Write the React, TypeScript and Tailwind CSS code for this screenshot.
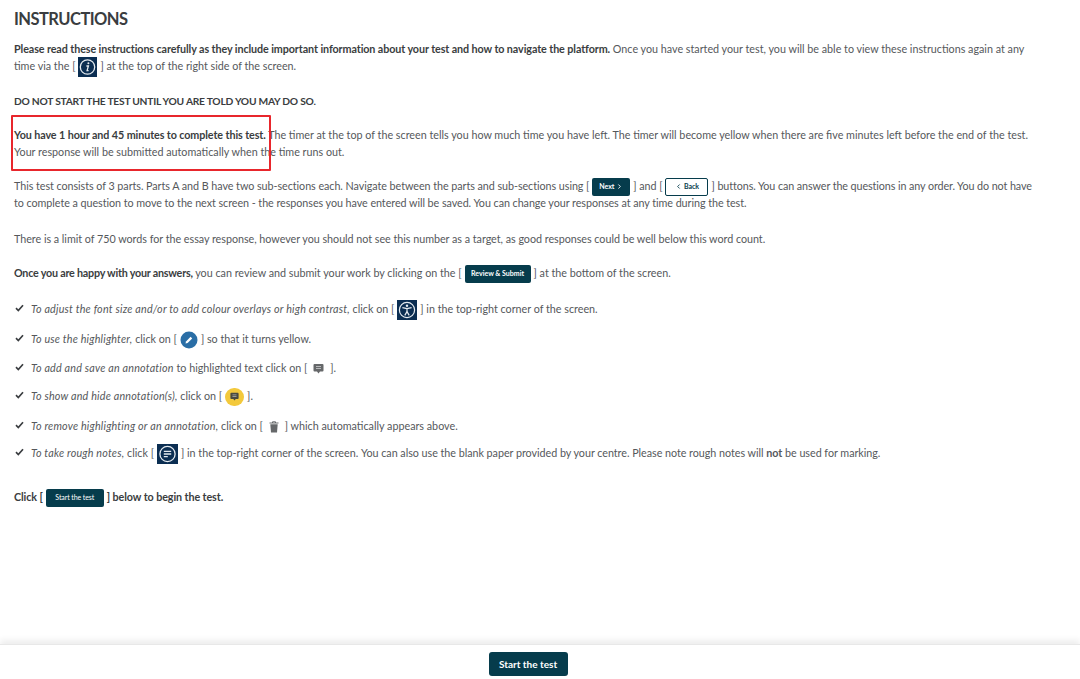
import React from 'react';
import { ChevronLeft, ChevronRight } from 'lucide-react';

const Bracket: React.FC<{ children: React.ReactNode }> = ({ children }) => (
    <span className="inline-flex items-center h-0 align-middle mx-[3px]">{children}</span>
);

const DarkBtn: React.FC<{ className: string; children: React.ReactNode }> = ({ className, children }) => (
    <span className={`inline-flex items-center justify-center rounded-[2px] bg-[#063c4c] text-white font-bold text-[7px] leading-none ${className}`}>
        {children}
    </span>
);

const InfoIcon = () => (
    <svg width="19" height="20" viewBox="0 0 19 20" className="block">
        <rect width="19" height="20" fill="#0b2e52" />
        <circle cx="9.5" cy="10" r="7.2" fill="none" stroke="#e5ebf0" strokeWidth="1.3" />
        <circle cx="10.4" cy="6.2" r="1" fill="#e5ebf0" />
        <path d="M8.4 9h2l-1.3 4.6h1.5" fill="none" stroke="#e5ebf0" strokeWidth="1.3" />
    </svg>
);

const AccessIcon = () => (
    <svg width="20" height="20" viewBox="0 0 20 20" className="block">
        <rect width="20" height="20" fill="#0b2e52" />
        <circle cx="10" cy="10" r="7.6" fill="none" stroke="#e5ebf0" strokeWidth="1.2" />
        <circle cx="10" cy="5.8" r="1.2" fill="#e5ebf0" />
        <path d="M5.4 7.6 10 8.6l4.6-1M10 8.600v3M10 11.600l-2.200 3.800M10 11.600l2.200 3.800" fill="none" stroke="#e5ebf0" strokeWidth="1.2" />
    </svg>
);

const NotesIcon = () => (
    <svg width="21" height="20" viewBox="0 0 21 20" className="block">
        <rect width="21" height="20" fill="#0b2e52" />
        <circle cx="10.5" cy="10" r="7.6" fill="none" stroke="#e5ebf0" strokeWidth="1.3" />
        <path d="M6.800 7.300h7.400M6.800 10h7.400M6.800 12.700h4" fill="none" stroke="#e5ebf0" strokeWidth="1.3" />
    </svg>
);

const PenIcon = () => (
    <svg width="18" height="18" viewBox="0 0 18 18" className="block">
        <circle cx="9" cy="9" r="8.500" fill="#2a6ea6" />
        <path d="M5.500 12.500 6 10.400l4.600-4.600 1.600 1.600-4.600 4.600z" fill="#fff" />
    </svg>
);

const CommentIcon: React.FC<{ color: string; size: number }> = ({ color, size }) => (
    <svg width={size} height={size} viewBox="0 0 11 11" className="block">
        <path d="M1.500 1h8a1 1 0 0 1 1 1v5.500a1 1 0 0 1-1 1H7L5.500 10.500 4 8.500H1.500a1 1 0 0 1-1-1V2a1 1 0 0 1 1-1z" fill={color} />
        <path d="M3 3.500h5M3 5.500h5" stroke="#fff" strokeWidth="0.9" opacity="0.6" />
    </svg>
);

const TrashIcon = () => (
    <svg width="10" height="12" viewBox="0 0 10 12" className="block">
        <path d="M0.500 2h9M3.500 2V0.800h3V2" fill="none" stroke="#66686a" strokeWidth="1" />
        <path d="M1.300 3.200h7.400L8 11.500H2z" fill="#66686a" />
    </svg>
);

const Check = () => (
    <svg width="9" height="8" viewBox="0 0 9 8" className="shrink-0 block">
        <path d="M1 4.200 3.300 6.500 8 1.200" fill="none" stroke="#3a3d40" strokeWidth="1.700" />
    </svg>
);

const ListItem: React.FC<{ className: string; children: React.ReactNode }> = ({ className, children }) => (
    <li className={`flex items-center gap-[7px] pl-[1px] h-[17px] ${className}`}>
        <Check />
        <span className="whitespace-nowrap">{children}</span>
    </li>
);

const Strong: React.FC<{ children: React.ReactNode }> = ({ children }) => (
    <b className="text-[#3a3d40] tracking-[-0.09px]">{children}</b>
);

const Em: React.FC<{ children: React.ReactNode }> = ({ children }) => (
    <i className="tracking-[0.2px]">{children}</i>
);

export default function App() {
    return (
        <div className="relative h-[679px] w-[1080px] overflow-hidden bg-white flex flex-col font-['Lato',sans-serif] text-[10.75px] leading-[17px] text-[#55585b]">
            <main className="flex-1 px-[14px] pt-[9px]">
                <h1 className="text-[16.5px] leading-[21px] tracking-[-0.55px] font-bold text-[#3a3d40]">INSTRUCTIONS</h1>

                <p className="mt-[9.5px] whitespace-nowrap">
                    <Strong>Please read these instructions carefully as they include important information about your test and how to navigate the platform.</Strong>{' '}
                    Once you have started your test, you will be able to view these instructions again at any<br />
                    time via the [<Bracket><InfoIcon /></Bracket>] at the top of the right side of the screen.
                </p>

                <p className="mt-[19px] font-bold text-[10.25px] text-[#3a3d40] tracking-[-0.24px]">DO NOT START THE TEST UNTIL YOU ARE TOLD YOU MAY DO SO.</p>

                <p className="mt-[16px] whitespace-nowrap">
                    <Strong>You have 1 hour and 45 minutes to complete this test.</Strong>{' '}
                    The timer at the top of the screen tells you how much time you have left. The timer will become yellow when there are five minutes left before the end of the test.<br />
                    Your response will be submitted automatically when the time runs out.
                </p>

                <p className="mt-[17px] whitespace-nowrap tracking-[-0.05px]">
                    This test consists of 3 parts. Parts A and B have two sub-sections each. Navigate between the parts and sub-sections using [
                    <Bracket><DarkBtn className="w-[38px] h-[18px] gap-[2px]">Next <ChevronRight size={7} strokeWidth={3} /></DarkBtn></Bracket>
                    ] and [
                    <Bracket><span className="inline-flex items-center justify-center gap-[2px] w-[43px] h-[18px] rounded-[2px] border border-[#063c4c] bg-white text-[#063c4c] font-bold text-[7px] leading-none"><ChevronLeft size={7} strokeWidth={3} /> Back</span></Bracket>
                    ] <span className="tracking-[-0.09px]">buttons. You can answer the questions in any order. You do not have</span><br />
                    to complete a question to move to the next screen - the responses you have entered will be saved. You can change your responses at any time during the test.
                </p>

                <p className="mt-[19px] whitespace-nowrap tracking-[-0.025px]">
                    There is a limit of 750 words for the essay response, however you should not see this number as a target, as good responses could be well below this word count.
                </p>

                <p className="mt-[17px] whitespace-nowrap">
                    <b className="text-[#3a3d40] tracking-[-0.22px]">Once you are happy with your answers,</b> you can review and submit your work by clicking on the [
                    <Bracket><DarkBtn className="w-[66px] h-[18px]">Review &amp; Submit</DarkBtn></Bracket>
                    ] at the bottom of the screen.
                </p>

                <ul className="mt-[19px]">
                    <ListItem className="">
                        <Em>To adjust the font size and/or to add colour overlays or high contrast,</Em> click on [<Bracket><AccessIcon /></Bracket>] in the top-right corner of the screen.
                    </ListItem>
                    <ListItem className="mt-[13px]">
                        <Em>To use the highlighter,</Em> click on [<Bracket><PenIcon /></Bracket>] so that it turns yellow.
                    </ListItem>
                    <ListItem className="mt-[12px]">
                        <Em>To add and save an annotation</Em> to highlighted text click on [<Bracket><span className="px-[3px]"><CommentIcon color="#66686a" size={11} /></span></Bracket>].
                    </ListItem>
                    <ListItem className="mt-[11px]">
                        <Em>To show and hide annotation(s),</Em> click on [<Bracket><span className="flex items-center justify-center w-[19px] h-[18px] rounded-full bg-[#f3c93c]"><CommentIcon color="#4a4a40" size={9} /></span></Bracket>].
                    </ListItem>
                    <ListItem className="mt-[13px]">
                        <Em>To remove highlighting or an annotation,</Em> click on [<Bracket><span className="px-[3px]"><TrashIcon /></span></Bracket>] which automatically appears above.
                    </ListItem>
                    <ListItem className="mt-[10px]">
                        <Em>To take rough notes,</Em> click [<Bracket><NotesIcon /></Bracket>] in the top-right corner of the screen. <span className="tracking-[-0.03px]">You can also use the blank paper provided by your centre. Please note rough notes will <b>not</b> be used for marking.</span>
                    </ListItem>
                </ul>

                <p className="mt-[27px] font-bold text-[#3a3d40] whitespace-nowrap tracking-[-0.09px]">
                    Click [<Bracket><DarkBtn className="w-[58px] h-[18px] font-normal">Start the test</DarkBtn></Bracket>] below to begin the test.
                </p>
            </main>

            <footer className="h-[35px] flex justify-center pt-[7px] pr-[24px] border-t border-[#e8e8e8] bg-white shadow-[0_-4px_6px_rgba(0,0,0,0.07)]">
                <button className="w-[79px] h-[24px] rounded-[3px] bg-[#063c4c] text-white font-bold text-[10px] leading-none">Start the test</button>
            </footer>

            {/* red callout drawn over the text */}
            <div className="absolute left-[11px] top-[115px] w-[260px] h-[56px] border-2 border-[#e8262c] rounded-[1px]" />
        </div>
    );
}
